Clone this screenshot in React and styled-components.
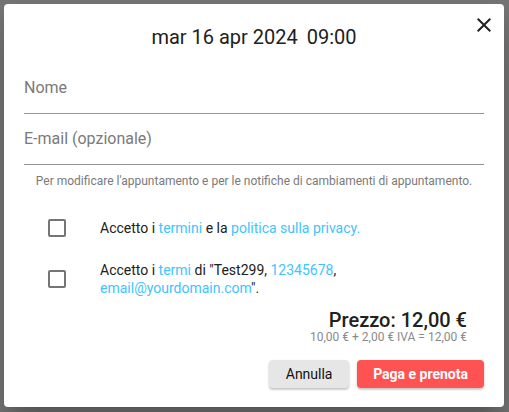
import styled, { createGlobalStyle } from "styled-components";

const GlobalStyle = createGlobalStyle`
  html, body { margin:0; padding:0; }
  body {
    font-family: Roboto, "Liberation Sans", sans-serif;
    background:#747474;
  }
`;

const Backdrop = styled.div`
  height:412px;
  padding:4px 5px 5px 4px;
  box-sizing:border-box;
`;
const Dialog = styled.div`
  position:relative;
  box-sizing:border-box;
  height:403px;
  padding:21px 20px 19px;
  background:#fff;
  border-radius:4px;
  box-shadow:0 11px 15px -7px rgba(0,0,0,.2), 0 24px 38px 3px rgba(0,0,0,.14);
  display:flex;
  flex-direction:column;
  color:#212121;
`;
const Close = styled.button`
  position:absolute;
  top:9px;
  right:8px;
  width:24px;
  height:24px;
  padding:0;
  border:0;
  background:none;
  color:#222;
  svg { display:block; }
`;
const Title = styled.h2`
  margin:0;
  font-size:20px;
  font-weight:400;
  line-height:24px;
  text-align:center;
  span + span { margin-left:9px; }
`;
const Field = styled.div`
  padding:15px 0 15px;
  border-bottom:1px solid rgba(0,0,0,.42);
  font-size:16px;
  line-height:20px;
  color:#7a7a7a;
  margin-top:${p => p.$first ? "14px" : "0"};
`;
const Helper = styled.p`
  margin:9px 0 0;
  font-size:12px;
  line-height:14px;
  color:#7a7a7a;
  text-align:center;
`;
const Checks = styled.div`
  display:flex;
  flex-direction:column;
  gap:24px;
  margin-top:31px;
`;
const CheckRow = styled.label`
  display:flex;
  align-items:center;
  font-size:14px;
  line-height:18px;
  color:#212121;
`;
const Box = styled.span`
  flex:none;
  box-sizing:border-box;
  width:18px;
  height:18px;
  margin:0 34px 0 24px;
  border:2px solid #757575;
  border-radius:2px;
`;
const Link = styled.a`
  color:#40c4ff;
  text-decoration:none;
`;
const Price = styled.div`
  margin-top:13px;
  padding-right:17px;
  text-align:right;
`;
const Total = styled.div`
  font-size:20px;
  font-weight:500;
  line-height:20px;
`;
const Breakdown = styled.div`
  margin-top:1px;
  font-size:12px;
  line-height:13px;
  color:#8a8a8a;
`;
const Actions = styled.div`
  display:flex;
  justify-content:flex-end;
  gap:8px;
  margin-top:auto;
`;
const Button = styled.button`
  height:28px;
  padding:0 16px;
  border:0;
  border-radius:4px;
  font-family:inherit;
  font-size:14px;
  font-weight:${p => p.$primary ? 700 : 400};
  color:${p => p.$primary ? "#fff" : "#111"};
  background:${p => p.$primary ? "#ff5252" : "#e6e6e6"};
  box-shadow:0 2px 2px rgba(0,0,0,.14), 0 1px 3px rgba(0,0,0,.12);
  min-width:${p => p.$primary ? "126px" : "80px"};
`;

export default function App() {
  return (
    <Backdrop>
      <GlobalStyle />
      <Dialog>
        <Close aria-label="close">
          <svg width="24" height="24" viewBox="0 0 24 24">
            <path fill="currentColor" d="M19 6.41L17.59 5 12 10.59 6.41 5 5 6.41 10.59 12 5 17.59 6.41 19 12 13.41 17.59 19 19 17.59 13.41 12z" />
          </svg>
        </Close>
        <Title><span>mar 16 apr 2024</span><span>09:00</span></Title>
        <Field $first>Nome</Field>
        <Field>E-mail (opzionale)</Field>
        <Helper>Per modificare l'appuntamento e per le notifiche di cambiamenti di appuntamento.</Helper>
        <Checks>
          <CheckRow>
            <Box />
            <span>Accetto i <Link>termini</Link> e la <Link>politica sulla privacy.</Link></span>
          </CheckRow>
          <CheckRow>
            <Box />
            <span>Accetto i <Link>termi</Link> di "Test299, <Link>12345678</Link>,<br /><Link>email@yourdomain.com</Link>".</span>
          </CheckRow>
        </Checks>
        <Price>
          <Total>Prezzo: 12,00 €</Total>
          <Breakdown>10,00 € + 2,00 € IVA = 12,00 €</Breakdown>
        </Price>
        <Actions>
          <Button>Annulla</Button>
          <Button $primary>Paga e prenota</Button>
        </Actions>
      </Dialog>
    </Backdrop>
  );
}
